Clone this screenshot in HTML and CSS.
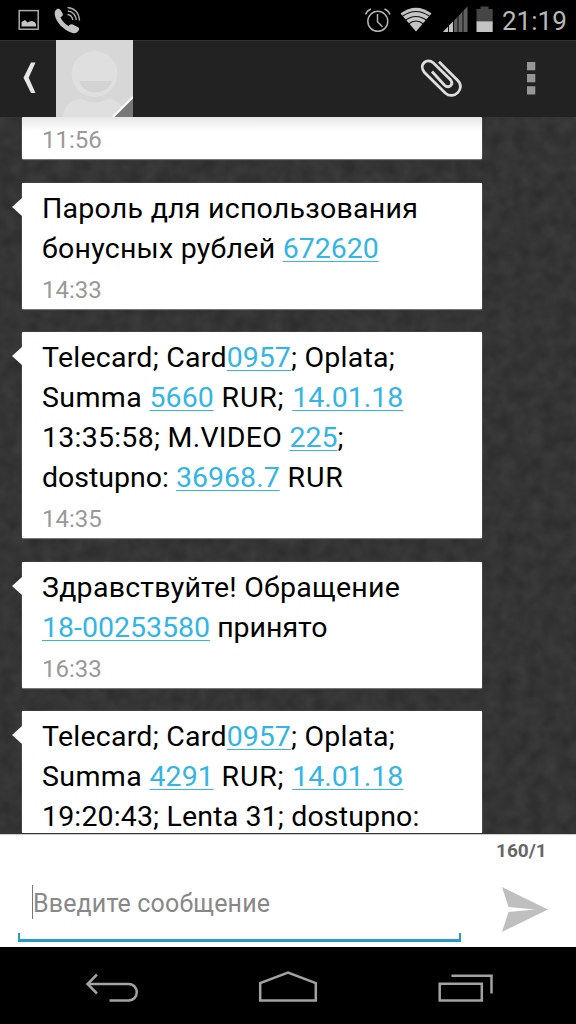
FILE: index.html
```html
<!DOCTYPE html>
<html lang="ru">
<head>
<meta charset="utf-8">
<title>Сообщения</title>
<link rel="stylesheet" href="styles.css">
</head>
<body>
<div class="phone">
  <div class="status">
    <svg class="status-left" width="100" height="40" viewBox="0 0 100 40">
      <rect x="19.2" y="10.6" width="19" height="18.6" fill="none" stroke="#aaa" stroke-width="1.5"/>
      <path d="M21.5 26.500v-4.500l3.500-2 2.500 2.500 2-1 2.500-.5 2.500 1 1.500 2v2.500z" fill="#c4c4c4"/>
      <path d="M55.500 10.500C57 8.500 59 8 60.500 10l2.200 3.500c.7 1.700-.5 2.800-2.200 4 1.700 3.500 4.300 6.500 8 8.600 1.500-1.600 2.800-2.200 4.200-1.500l5 2.400c1.700 1 1.900 2.100.8 3.800-1.400 2.100-3.300 2.800-6 2.100C63.500 30.500 55.500 21.500 54.800 14.500c-.2-1.700 0-2.900.7-4z" fill="#c4c4c4"/>
      <path d="M67.500 14.500q4.500.5 5.300 5.500M67.800 11q7.500 1 8.500 9M67.500 7.500q11 1 12 13" fill="none" stroke="#aaa" stroke-width="1.4"/>
    </svg>
    <svg class="status-right" width="136" height="40" viewBox="360 0 136 40">
      <g fill="none" stroke="#b2b2b2" stroke-width="1.500">
        <circle cx="377.800" cy="21.300" r="10"/>
        <path d="M377.500 14v7.700l5 5M365.500 14.500q1.500-4 5.500-5.500M384.500 9q4 1.500 5.500 5.500"/>
      </g>
      <path d="M400.500 13.500Q416 2 431.500 13.500L416 31.500z" fill="#c4c4c4"/>
      <path d="M402 16.500q14-10 28 0M405 20.500q11-8 22 0M408.500 24q7.500-6 15 0" fill="none" stroke="#111" stroke-width="1.200"/>
      <path d="M443 32L467.500 6.500V32z" fill="#606060"/>
      <path d="M443 32L453 21.500V32z" fill="#c4c4c4"/>
      <path d="M448.500 20v13M453.500 18v15M458 13v20M463 9v24" stroke="#000" stroke-width=".9"/>
      <path d="M476.500 9h4V6.500h8V9h4.200v12.500h-16.200z" fill="#454545"/>
      <path d="M476.500 21.300h16.200V32h-16.200z" fill="#c4c4c4"/>
    </svg>
    <span class="clock">21:19</span>
  </div>

  <header class="bar">
    <svg class="back" width="56" height="77" viewBox="0 40 56 77"><path d="M35.500 62.500H31L23.500 77.800 31 93h4.500L28.700 77.800z" fill="#e6e6e6"/></svg>
    <svg class="avatar" width="77" height="77" viewBox="0 0 77 77">
      <rect width="77" height="77" fill="#d7d7d7"/>
      <path d="M7 77c1-12 7-17 18-18q13 7 27 0c10 1 17 6 18 18z" fill="#dfdfdf"/>
      <circle cx="38.500" cy="34" r="23" fill="#dfdfdf"/>
      <path d="M23 41h33q-4 11-17 11.500Q27 52 23 41z" fill="#d3d3d3"/>
      <path d="M77 57v20H57z" fill="#777"/>
      <path d="M77 57L57 77" stroke="#fff" stroke-width="2"/>
    </svg>
    <svg class="actions" width="156" height="77" viewBox="420 40 156 77">
      <path d="M439 61.800L458 80.800C465.500 88.500 454 100.500 445.500 93.200L424.500 72.500C418 64.500 427 57.300 433.500 63L450.700 80C454 85 448.500 88.800 444.500 85.200L432 71.500" fill="none" stroke="#dedede" stroke-width="2.800"/>
      <path d="M527 62h8.300v8.300H527zM527 74h8.300v8.300H527zM527 86.200h8.300v8.300H527z" fill="#969696"/>
    </svg>
  </header>

  <main class="thread">
    <svg class="texture" width="576" height="717">
      <filter id="grain" x="0" y="0" width="100%" height="100%" color-interpolation-filters="sRGB">
        <feTurbulence type="fractalNoise" baseFrequency=".07" numOctaves="2" seed="4"/>
        <feColorMatrix values=".08 0 0 0 .165 .08 0 0 0 .165 .08 0 0 0 .165 0 0 0 0 1"/>
      </filter>
      <rect width="576" height="717" filter="url(#grain)"/>
    </svg>
    <div class="messages">
      <article class="bubble partial"><time>11:56</time></article>
      <article class="bubble tail">
        <p><span class="line">Пароль для использования</span><span class="line">бонусных рублей <a>672620</a></span></p>
        <time>14:33</time>
      </article>
      <article class="bubble tail">
        <p><span class="line">Telecard; Card<a>0957</a>; Oplata;</span><span class="line amount">Summa <a>5660</a><span class="currency"> RUR; </span><a>14.01.18</a></span><span class="line">13:35:58; M.VIDEO <a>225</a>;</span><span class="line balance">dostupno: <a>36968.7</a><span class="currency"> RUR</span></span></p>
        <time>14:35</time>
      </article>
      <article class="bubble tail">
        <p><span class="line">Здравствуйте! Обращение</span><span class="line balance"><a>18-00253580</a> принято</span></p>
        <time>16:33</time>
      </article>
      <article class="bubble tail">
        <p><span class="line">Telecard; Card<a>0957</a>; Oplata;</span><span class="line amount">Summa <a>4291</a><span class="currency"> RUR; </span><a>14.01.18</a></span><span class="line shop">19:20:43; Lenta 31; dostupno:</span></p>
      </article>
    </div>
  </main>

  <section class="composer">
    <div class="field">
      <span class="placeholder">Введите сообщение</span>
    </div>
    <div class="side">
      <span class="counter">160/1</span>
      <svg class="send" width="46" height="46" viewBox="0 0 46 46"><path d="M0 0L46 22.500 0 45 6.500 25 33 22.500 6.500 20z" fill="#bfbfbf"/></svg>
    </div>
  </section>

  <nav class="nav">
    <svg width="576" height="77" viewBox="0 947 576 77" fill="none" stroke="#a2a2a2" stroke-width="2.500">
      <path d="M97 974.500L87.500 984l9.500 9.500M88 984h40.500c11 0 11 16.500 0 16.500H109.500"/>
      <path d="M260.200 1000.500V983L288 972.500 315.800 983v17.500z"/>
      <path d="M439.700 983.800h42.100v16.700h-42.100zM451.500 975.700h40V993.500"/>
    </svg>
  </nav>
</div>
</body>
</html>
```

FILE: styles.css
```css
body {
  margin: 0;
  background: #000;
  font-family: Roboto, "Noto Sans", sans-serif;
}
.phone {
  width: 576px;
  height: 1024px;
  display: flex;
  flex-direction: column;
  overflow: hidden;
}
svg { display: block; flex: none; }
.status {
  height: 40px;
  display: flex;
  background: #000;
}
.status-right { margin-left: 260px; }
.clock {
  margin-left: 6px;
  font-size: 26px;
  line-height: 42px;
  color: #b8b8b8;
  white-space: nowrap;
}
.bar {
  height: 77px;
  display: flex;
  background: #222;
  box-shadow: inset 0 1px #303030;
}
.actions { margin-left: auto; }
.thread {
  position: relative;
  box-sizing: border-box;
  height: 717px;
  overflow: hidden;
  background: #333;
  border-bottom: 1px solid #333;
}
.texture { position: absolute; top: 0; left: 0; }
.messages {
  position: relative;
  display: flex;
  flex-direction: column;
  gap: 23.500px;
  padding-left: 22px;
}
.bubble {
  position: relative;
  box-sizing: border-box;
  width: 460px;
  padding: 6px 20px 5px;
  background: #fff;
  border-radius: 1px;
  box-shadow: 0 0 1px #aaa, 0 1px 1px #777;
  color: #000;
}
.partial {
  height: 42px;
  padding-top: 5px;
  background: linear-gradient(#e6e6e6, #fff 14px);
}
.tail::before {
  content: "";
  position: absolute;
  left: -10px;
  top: 15px;
  border: solid transparent;
  border-width: 9.500px 10px 9.500px 0;
  border-right-color: #fff;
}
.bubble p { margin: 0; font-size: 28.500px; }
.line {
  display: block;
  height: 40px;
  line-height: 40px;
  letter-spacing: .25px;
  white-space: nowrap;
}
.amount { letter-spacing: .4px; }
.balance { letter-spacing: 0; }
.shop { letter-spacing: .15px; }
.currency { letter-spacing: .8px; }
.bubble a {
  color: #33b5e5;
  letter-spacing: 0;
  text-decoration: underline;
  text-decoration-thickness: 1px;
  text-underline-offset: 3px;
  text-decoration-skip-ink: none;
}
.bubble time {
  display: block;
  height: 35px;
  line-height: 42px;
  font-size: 24px;
  color: #999;
}
.partial time { line-height: 36px; }
.composer {
  height: 113px;
  box-sizing: border-box;
  display: flex;
  background: #fff;
  border-top: 1px solid #ccc;
}
.field {
  box-sizing: border-box;
  width: 443px;
  margin: 98px 0 0 18px;
  height: 9px;
  border: 3px solid #269bc4;
  border-width: 0 2px 3px;
  display: flex;
  align-items: flex-end;
}
.placeholder {
  margin: 0 0 20px 12px;
  border-left: 1px solid #777;
  height: 34px;
  line-height: 37px;
  font-size: 25px;
  letter-spacing: .15px;
  color: #888;
  white-space: nowrap;
}
.side { display: flex; flex-direction: column; margin-left: 35px; }
.counter {
  height: 30px;
  line-height: 31px;
  font-size: 19px;
  font-weight: 700;
  color: #666;
}
.send { margin: 22px 0 0 6px; }
.nav { height: 77px; background: #000; }
```
